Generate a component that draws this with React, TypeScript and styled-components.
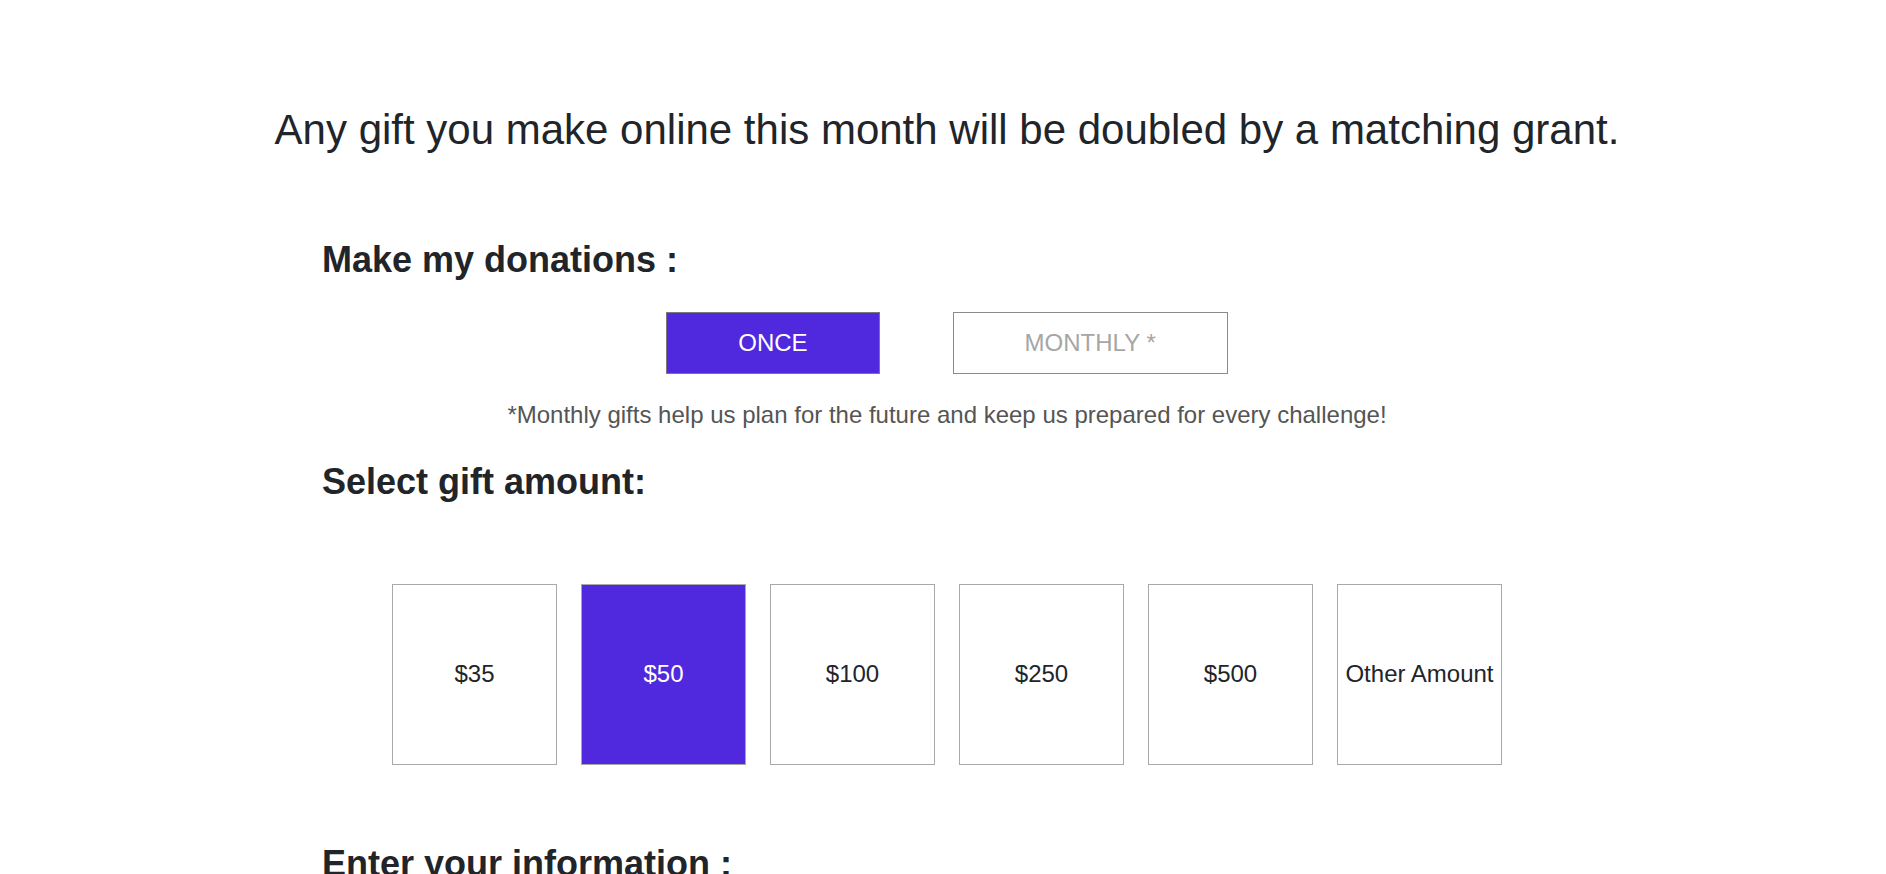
import React, { useState } from "react";
import styled, { createGlobalStyle } from "styled-components";

const GlobalStyle = createGlobalStyle`
  html, body {
    margin: 0;
    padding: 0;
    background: #ffffff;
  }
  body {
    font-family: "Liberation Sans", Arial, sans-serif;
    color: #212529;
  }
`;

const Page = styled.main`
  padding: 105px 0 0 8px;
  box-sizing: border-box;
  width: 100%;
`;

const Headline = styled.h1`
  margin: 0;
  text-align: center;
  font-size: 42px;
  line-height: 1.2;
  font-weight: 400;
  color: #212529;
`;

const Form = styled.section`
  width: 1250px;
  margin: 83px auto 0;
  display: flex;
  flex-direction: column;
`;

const SectionTitle = styled.h2<{ gap?: number }>`
  margin: ${({ gap }) => gap ?? 0}px 0 0;
  font-size: 36px;
  line-height: 1.2;
  font-weight: 700;
  color: #212529;
`;

const FrequencyRow = styled.div`
  display: flex;
  justify-content: center;
  gap: 73px;
  margin-top: 30px;
`;

const FrequencyButton = styled.button<{ active?: boolean }>`
  height: 62px;
  padding: 0 71px;
  font-family: "Liberation Sans", Arial, sans-serif;
  font-size: 24px;
  border: 1px solid ${({ active }) => (active ? "#7a7a7a" : "#8a8a8a")};
  background: ${({ active }) => (active ? "#5029de" : "#ffffff")};
  color: ${({ active }) => (active ? "#ffffff" : "#a6a6a6")};
  cursor: pointer;
`;

const Note = styled.p`
  margin: 27px 0 0;
  text-align: center;
  font-size: 24px;
  line-height: 1.2;
  color: #555555;
`;

const AmountGrid = styled.div`
  display: flex;
  justify-content: center;
  gap: 24px;
  margin-top: 80px;
`;

const AmountBox = styled.button<{ active?: boolean }>`
  width: 165px;
  height: 181px;
  padding: 0;
  display: flex;
  align-items: center;
  justify-content: center;
  font-family: "Liberation Sans", Arial, sans-serif;
  font-size: 24px;
  border: 1px solid #a9a9a9;
  background: ${({ active }) => (active ? "#5029de" : "#ffffff")};
  color: ${({ active }) => (active ? "#ffffff" : "#212529")};
  cursor: pointer;
`;

const amounts = ["$35", "$50", "$100", "$250", "$500", "Other Amount"];

export default function App() {
  const [frequency, setFrequency] = useState<"once" | "monthly">("once");
  const [amount, setAmount] = useState("$50");

  return (
    <>
      <GlobalStyle />
      <Page>
        <Headline>
          Any gift you make online this month will be doubled by a matching grant.
        </Headline>

        <Form>
          <SectionTitle>Make my donations :</SectionTitle>
          <FrequencyRow>
            <FrequencyButton
              active={frequency === "once"}
              onClick={() => setFrequency("once")}
            >
              ONCE
            </FrequencyButton>
            <FrequencyButton
              active={frequency === "monthly"}
              onClick={() => setFrequency("monthly")}
            >
              MONTHLY *
            </FrequencyButton>
          </FrequencyRow>
          <Note>
            *Monthly gifts help us plan for the future and keep us prepared for every
            challenge!
          </Note>

          <SectionTitle gap={31}>Select gift amount:</SectionTitle>
          <AmountGrid>
            {amounts.map((a) => (
              <AmountBox key={a} active={amount === a} onClick={() => setAmount(a)}>
                {a}
              </AmountBox>
            ))}
          </AmountGrid>

          <SectionTitle gap={77}>Enter your information :</SectionTitle>
        </Form>
      </Page>
    </>
  );
}
